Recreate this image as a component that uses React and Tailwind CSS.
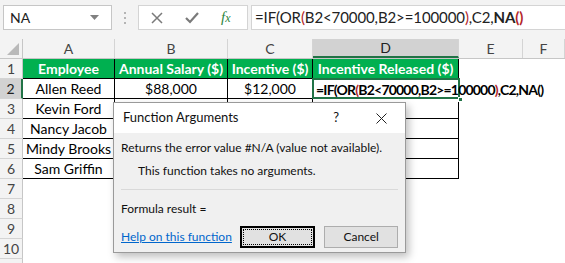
import React from "react";

const cols = [
  { key: "A", w: "w-[92px]" },
  { key: "B", w: "w-[113px]" },
  { key: "C", w: "w-[85px]" },
  { key: "D", w: "w-[146px]" },
  { key: "E", w: "w-[64px]" },
  { key: "F", w: "flex-1" },
];

// B3:C6 sit under the dialog, so only the names show
const rows = [
  ["Allen Reed", "$88,000", "$12,000"],
  ["Kevin Ford", "", ""],
  ["Nancy Jacob", "", ""],
  ["Mindy Brooks", "", ""],
  ["Sam Griffin", "", ""],
];

const cellFont = "font-['Lato','Liberation_Sans',sans-serif] text-[14px]";
const uiFont = "font-['Lato','Liberation_Sans',sans-serif]";

function FormulaBar() {
  return (
    <div className="h-[33px] bg-[#f3f3f3] flex items-center pl-[3px] pt-[2px]">
      <div className="w-[109px] h-[25px] bg-white border border-[#c6c6c6] flex items-center justify-between pl-[6px] pr-[12px]">
        <span className={`${uiFont} text-[14px] text-[#222]`}>NA</span>
        <svg width="9" height="5" viewBox="0 0 9 5">
          <path d="M0 0h9L4.5 5z" fill="#808080" />
        </svg>
      </div>
      <div className="w-[26px] flex flex-col items-center gap-[3px]">
        <span className="w-[2px] h-[2px] bg-[#b4b4b4]" />
        <span className="w-[2px] h-[2px] bg-[#b4b4b4]" />
        <span className="w-[2px] h-[2px] bg-[#b4b4b4]" />
      </div>
      <div className="w-[110px] h-[25px] bg-white border border-[#d4d4d4] flex items-center pl-[12px] gap-[22px]">
        <svg width="12" height="12" viewBox="0 0 12 12">
          <path d="M1 1l10 10M11 1L1 11" stroke="#7a7a7a" strokeWidth="1.5" />
        </svg>
        <svg width="14" height="12" viewBox="0 0 14 12">
          <path d="M1 6l4 4L13 1" stroke="#7a7a7a" strokeWidth="2.2" fill="none" />
        </svg>
        <span className="font-['Liberation_Serif',serif] italic text-[15px] text-[#2e8540] leading-none">
          f<span className="text-[12px]">x</span>
        </span>
      </div>
      <div className="ml-[3px] flex-1 h-[25px] bg-white border border-[#d4d4d4] border-r-0 flex items-center pl-[3px]">
        <span className="font-['Lato','Liberation_Sans',sans-serif] text-[15px] tracking-[-0.1px] text-[#222] whitespace-nowrap">
          =IF(OR<span className="text-[#b4262a]">(</span>B2&lt;70000,B2&gt;=100000
          <span className="text-[#b4262a]">)</span>,C2,<b>NA</b>
          <b className="text-[#b4262a]">()</b>
        </span>
      </div>
    </div>
  );
}

function HeaderRow() {
  return (
    <div className="flex h-[20px] bg-[#f3f3f3] border-b border-[#c6c6c6]">
      <div className="w-[23px] border-r border-[#c6c6c6] flex items-end justify-end pr-[3px] pb-[3px]">
        <svg width="12" height="12" viewBox="0 0 12 12">
          <path d="M12 0v12H0z" fill="#b9b9b9" />
        </svg>
      </div>
      {cols.map((c) => (
        <div
          key={c.key}
          className={`${c.w} border-r border-[#d4d4d4] flex items-center justify-center ${cellFont} ${
            c.key === "D"
              ? "bg-[#d2d2d2] text-[#222] border-b-2 border-b-[#217346]"
              : "text-[#444]"
          }`}
        >
          {c.key}
        </div>
      ))}
    </div>
  );
}

function RowHead({ n, sel }) {
  return (
    <div
      className={`w-[23px] shrink-0 flex items-center justify-center ${cellFont} border-b border-[#d4d4d4] ${
        sel
          ? "bg-[#d2d2d2] text-[#222] border-r-2 border-r-[#217346]"
          : "bg-[#f3f3f3] text-[#444] border-r border-r-[#c6c6c6]"
      }`}
    >
      {n}
    </div>
  );
}

function Cell({ w, children, cls = "" }) {
  return (
    <div
      className={`${w} shrink-0 h-full border-r border-b border-black flex items-center justify-center whitespace-nowrap overflow-hidden ${cellFont} ${cls}`}
    >
      {children}
    </div>
  );
}

function Sheet() {
  return (
    <div>
      <HeaderRow />
      <div className="flex h-[20px]">
        <RowHead n={1} />
        {["Employee", "Annual Salary ($)", "Incentive ($)", "Incentive Released ($)"].map((t, i) => (
          <Cell key={t} w={cols[i].w} cls="bg-[#00b050] text-white font-bold">
            {t}
          </Cell>
        ))}
      </div>
      {rows.map((r, i) => (
        <div key={i} className="flex h-[20px]">
          <RowHead n={i + 2} sel={i === 0} />
          <Cell w={cols[0].w} cls="text-black">{r[0]}</Cell>
          <Cell w={cols[1].w} cls="text-black">{r[1]}</Cell>
          <Cell w={cols[2].w} cls="text-black">{r[2]}</Cell>
          {i === 0 ? (
            <div className={`${cols[3].w} shrink-0 h-full relative`}>
              <div className="absolute -left-[1px] -top-[1px] w-[148px] h-[21px] border-2 border-[#217346]" />
              <div className="absolute right-[-4px] bottom-[-3px] w-[5px] h-[5px] bg-[#217346] border border-white" />
              <div className={`absolute left-[3px] top-0 h-full flex items-center whitespace-nowrap ${cellFont} tracking-[-0.8px] font-bold text-black z-10`}>
                =IF(OR<span className="text-[#b4262a]">(</span>B2&lt;70000,B2&gt;=100000
                <span className="text-[#b4262a]">)</span>,C2,NA()
              </div>
            </div>
          ) : (
            <Cell w={cols[3].w} />
          )}
        </div>
      ))}
      {[7, 8, 9, 10, 11].map((n) => (
        <div key={n} className="flex h-[20px]">
          <RowHead n={n} />
        </div>
      ))}
    </div>
  );
}

function Dialog() {
  return (
    <div
      className={`absolute left-[113px] top-[102px] w-[293px] h-[151px] bg-[#f0f0f0] border border-[#9a9a9a] shadow-[3px_4px_8px_rgba(0,0,0,0.25)] ${uiFont} text-[12px] text-[#111] flex flex-col whitespace-nowrap`}
    >
      <div className="h-[30px] bg-white flex items-center pl-[9px] pr-[18px]">
        <span className="flex-1 text-[13px]">Function Arguments</span>
        <span className="mr-[37px] text-[13px]">?</span>
        <svg width="11" height="11" viewBox="0 0 11 11">
          <path d="M0.5 0.5l10 10M10.5 0.5l-10 10" stroke="#222" strokeWidth="1" />
        </svg>
      </div>
      <div className="px-[7px] pt-[7px] flex flex-col">
        <div className="h-[16px] leading-[16px]">Returns the error value #N/A (value not available).</div>
        <div className="h-[16px] leading-[16px] mt-[7px] pl-[17px]">This function takes no arguments.</div>
        <div className="mt-[10px] h-px bg-[#d9d9d9]" />
        <div className="h-[16px] leading-[16px] mt-[11px]">Formula result =</div>
        <div className="mt-[9px] flex items-center">
          <span className="text-[#0066cc] underline w-[119px]">Help on this function</span>
          <div className="w-[76px] h-[22px] border-2 border-black bg-[#e1e1e1] p-[1px]">
            <div className="h-full border border-dotted border-black flex items-center justify-center">OK</div>
          </div>
          <div className="ml-[9px] w-[74px] h-[22px] border border-[#adadad] bg-[#e1e1e1] flex items-center justify-center">
            Cancel
          </div>
        </div>
      </div>
    </div>
  );
}

export default function App() {
  return (
    <div className="w-[565px] h-[263px] bg-white relative overflow-hidden">
      <FormulaBar />
      <div className="h-[6px] bg-[#f3f3f3]" />
      <Sheet />
      <Dialog />
    </div>
  );
}
